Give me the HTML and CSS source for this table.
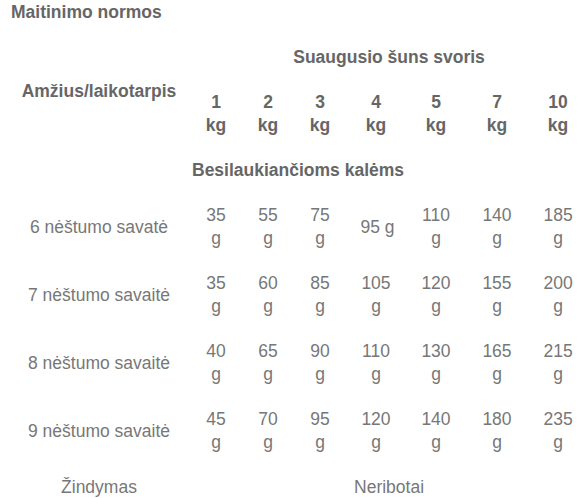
FILE: index.html
```html
<!DOCTYPE html>
<html lang="lt">
<head>
<meta charset="utf-8">
<title>Maitinimo normos</title>
<link rel="stylesheet" href="styles.css">
</head>
<body>
<div class="page">
  <h1 class="title">Maitinimo normos</h1>
  <table class="norms">
    <colgroup>
      <col class="c-label">
      <col class="c-s"><col class="c-s"><col class="c-s">
      <col class="c-m"><col class="c-m">
      <col class="c-l">
      <col class="c-m">
    </colgroup>
    <thead>
      <tr>
        <th rowspan="2" class="label">Amžius/laikotarpis</th>
        <th colspan="7">Suaugusio šuns svoris</th>
      </tr>
      <tr>
        <th>1 kg</th><th>2 kg</th><th>3 kg</th><th>4 kg</th><th>5 kg</th><th>7 kg</th><th>10 kg</th>
      </tr>
    </thead>
    <tbody>
      <tr>
        <th colspan="8">Besilaukiančioms kalėms</th>
      </tr>
      <tr>
        <td class="label">6 nėštumo savatė</td>
        <td>35 g</td><td>55 g</td><td>75 g</td><td class="single">95 g</td><td>110 g</td><td>140 g</td><td>185 g</td>
      </tr>
      <tr>
        <td class="label">7 nėštumo savaitė</td>
        <td>35 g</td><td>60 g</td><td>85 g</td><td>105 g</td><td>120 g</td><td>155 g</td><td>200 g</td>
      </tr>
      <tr>
        <td class="label">8 nėštumo savaitė</td>
        <td>40 g</td><td>65 g</td><td>90 g</td><td>110 g</td><td>130 g</td><td>165 g</td><td>215 g</td>
      </tr>
      <tr>
        <td class="label">9 nėštumo savaitė</td>
        <td>45 g</td><td>70 g</td><td>95 g</td><td>120 g</td><td>140 g</td><td>180 g</td><td>235 g</td>
      </tr>
      <tr>
        <td class="label">Žindymas</td>
        <td colspan="7">Neribotai</td>
      </tr>
    </tbody>
  </table>
</div>
</body>
</html>
```
FILE: styles.css
```css
html, body {
  margin: 0;
  padding: 0;
  background: #ffffff;
  overflow: hidden;
}

body {
  font-family: "Liberation Sans", Arial, sans-serif;
  font-size: 17.5px;
  line-height: 23px;
  color: #777777;
}

.page {
  padding-top: 1px;
}

.title {
  margin: 0 0 11px 0;
  padding-left: 11px;
  font-size: 17.5px;
  line-height: 23px;
  font-weight: bold;
  color: #666666;
}

.norms {
  margin-left: 8px;
  width: 580px;
  table-layout: fixed;
  border-collapse: collapse;
  border-spacing: 0;
}

.c-label { width: 182px; }
.c-s { width: 52px; }
.c-m { width: 60px; }
.c-l { width: 62px; }

.norms th,
.norms td {
  padding: 11px 14.5px;
  text-align: center;
  vertical-align: middle;
}

.norms th {
  font-weight: bold;
  color: #666666;
}

.norms td {
  font-weight: normal;
  color: #777777;
}

.norms .label {
  padding-left: 0;
  padding-right: 0;
  white-space: nowrap;
}

.norms .single {
  white-space: nowrap;
}
```
